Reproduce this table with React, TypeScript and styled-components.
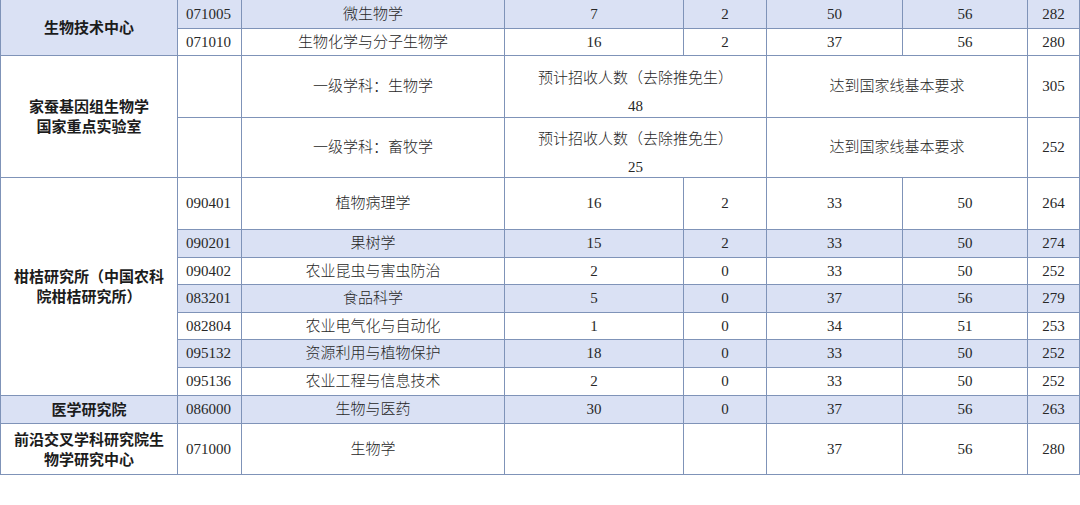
import styled, { createGlobalStyle } from 'styled-components'

const GlobalStyle = createGlobalStyle`
	html, body {
		margin: 0;
		padding: 0;
		background: #ffffff;
	}
	body {
		width: 1080px;
		height: 505px;
		overflow: hidden;
	}
`

type Cell = {
	text?: string
	second?: string
	span?: number
	rows?: number
	bold?: boolean
	left?: boolean
	shade?: boolean
}

type Row = { h: number; shade?: boolean; cells: Cell[] }

const WIDTHS = [177, 64, 263, 179, 83, 136, 125, 52]

const ROWS: Row[] = [
	{
		h: 28,
		shade: true,
		cells: [
			{ text: '生物技术中心', rows: 2, bold: true, shade: true },
			{ text: '071005', left: true },
			{ text: '微生物学' },
			{ text: '7' },
			{ text: '2' },
			{ text: '50' },
			{ text: '56' },
			{ text: '282' },
		],
	},
	{
		h: 27,
		cells: [
			{ text: '071010', left: true },
			{ text: '生物化学与分子生物学' },
			{ text: '16' },
			{ text: '2' },
			{ text: '37' },
			{ text: '56' },
			{ text: '280' },
		],
	},
	{
		h: 62,
		cells: [
			{ text: '家蚕基因组生物学\n国家重点实验室', rows: 2, bold: true },
			{ text: '' },
			{ text: '一级学科：生物学' },
			{ text: '预计招收人数（去除推免生）', second: '48', span: 2 },
			{ text: '达到国家线基本要求', span: 2 },
			{ text: '305' },
		],
	},
	{
		h: 60,
		cells: [
			{ text: '' },
			{ text: '一级学科：畜牧学' },
			{ text: '预计招收人数（去除推免生）', second: '25', span: 2 },
			{ text: '达到国家线基本要求', span: 2 },
			{ text: '252' },
		],
	},
	{
		h: 52,
		cells: [
			{ text: '柑桔研究所（中国农科\n院柑桔研究所）', rows: 7, bold: true },
			{ text: '090401', left: true },
			{ text: '植物病理学' },
			{ text: '16' },
			{ text: '2' },
			{ text: '33' },
			{ text: '50' },
			{ text: '264' },
		],
	},
	{
		h: 28,
		shade: true,
		cells: [
			{ text: '090201', left: true },
			{ text: '果树学' },
			{ text: '15' },
			{ text: '2' },
			{ text: '33' },
			{ text: '50' },
			{ text: '274' },
		],
	},
	{
		h: 27,
		cells: [
			{ text: '090402', left: true },
			{ text: '农业昆虫与害虫防治' },
			{ text: '2' },
			{ text: '0' },
			{ text: '33' },
			{ text: '50' },
			{ text: '252' },
		],
	},
	{
		h: 28,
		shade: true,
		cells: [
			{ text: '083201', left: true },
			{ text: '食品科学' },
			{ text: '5' },
			{ text: '0' },
			{ text: '37' },
			{ text: '56' },
			{ text: '279' },
		],
	},
	{
		h: 27,
		cells: [
			{ text: '082804', left: true },
			{ text: '农业电气化与自动化' },
			{ text: '1' },
			{ text: '0' },
			{ text: '34' },
			{ text: '51' },
			{ text: '253' },
		],
	},
	{
		h: 28,
		shade: true,
		cells: [
			{ text: '095132', left: true },
			{ text: '资源利用与植物保护' },
			{ text: '18' },
			{ text: '0' },
			{ text: '33' },
			{ text: '50' },
			{ text: '252' },
		],
	},
	{
		h: 28,
		cells: [
			{ text: '095136', left: true },
			{ text: '农业工程与信息技术' },
			{ text: '2' },
			{ text: '0' },
			{ text: '33' },
			{ text: '50' },
			{ text: '252' },
		],
	},
	{
		h: 28,
		shade: true,
		cells: [
			{ text: '医学研究院', bold: true },
			{ text: '086000', left: true },
			{ text: '生物与医药' },
			{ text: '30' },
			{ text: '0' },
			{ text: '37' },
			{ text: '56' },
			{ text: '263' },
		],
	},
	{
		h: 51,
		cells: [
			{ text: '前沿交叉学科研究院生\n物学研究中心', bold: true },
			{ text: '071000', left: true },
			{ text: '生物学' },
			{ text: '' },
			{ text: '' },
			{ text: '37' },
			{ text: '56' },
			{ text: '280' },
		],
	},
]

const LINE = '#7f93b8'
const SHADE = '#dae1f4'

const Page = styled.div`
	width: 1080px;
	height: 505px;
	background: #fff;
	overflow: hidden;
`
const ScoreTable = styled.table`
	width: 1079px;
	table-layout: fixed;
	border-collapse: collapse;
	border-top: hidden;
	border-bottom: 1px solid ${LINE};
	border-left: 1px solid ${LINE};
	border-right: 1px solid ${LINE};
`
const Col = styled.col<{ $w: number }>`
	width: ${({ $w }) => $w}px;
`
const Tr = styled.tr<{ $h: number; $shade?: boolean }>`
	height: ${({ $h }) => $h}px;
	background: ${({ $shade }) => ($shade ? SHADE : '#ffffff')};
`
const Td = styled.td<{
	$bold?: boolean
	$left?: boolean
	$shade?: boolean
	$twoLine?: boolean
}>`
	border: 1px solid ${LINE};
	padding: ${({ $twoLine }) => ($twoLine ? '11px 0 0' : '0')};
	padding-left: ${({ $left }) => ($left ? '8px' : '0')};
	text-align: ${({ $left }) => ($left ? 'left' : 'center')};
	vertical-align: middle;
	white-space: pre-line;
	color: ${({ $bold }) => ($bold ? '#1c1c1c' : '#272727')};
	background: ${({ $shade }) => ($shade ? SHADE : 'transparent')};
	font-family: ${({ $bold }) =>
		$bold
			? '"Noto Sans CJK SC", sans-serif'
			: '"Liberation Serif", "Noto Sans CJK SC", serif'};
	font-weight: ${({ $bold }) => ($bold ? 700 : 300)};
	font-size: 15px;
	line-height: 20px;
	overflow: hidden;
`
const Second = styled.div`
	margin-top: 8px;
	font-family: 'Liberation Serif', serif;
	font-weight: 400;
`

function App() {
	return (
		<Page>
			<GlobalStyle />
			<ScoreTable>
				<colgroup>
					{WIDTHS.map((w, i) => (
						<Col key={i} $w={w} />
					))}
				</colgroup>
				<tbody>
					{ROWS.map((row, ri) => (
						<Tr key={ri} $h={row.h} $shade={row.shade}>
							{row.cells.map((c, ci) => (
								<Td
									key={ci}
									colSpan={c.span}
									rowSpan={c.rows}
									$bold={c.bold}
									$left={c.left}
									$shade={c.shade}
									$twoLine={!!c.second}
								>
									{c.text}
									{c.second && <Second>{c.second}</Second>}
								</Td>
							))}
						</Tr>
					))}
				</tbody>
			</ScoreTable>
		</Page>
	)
}
export default App
